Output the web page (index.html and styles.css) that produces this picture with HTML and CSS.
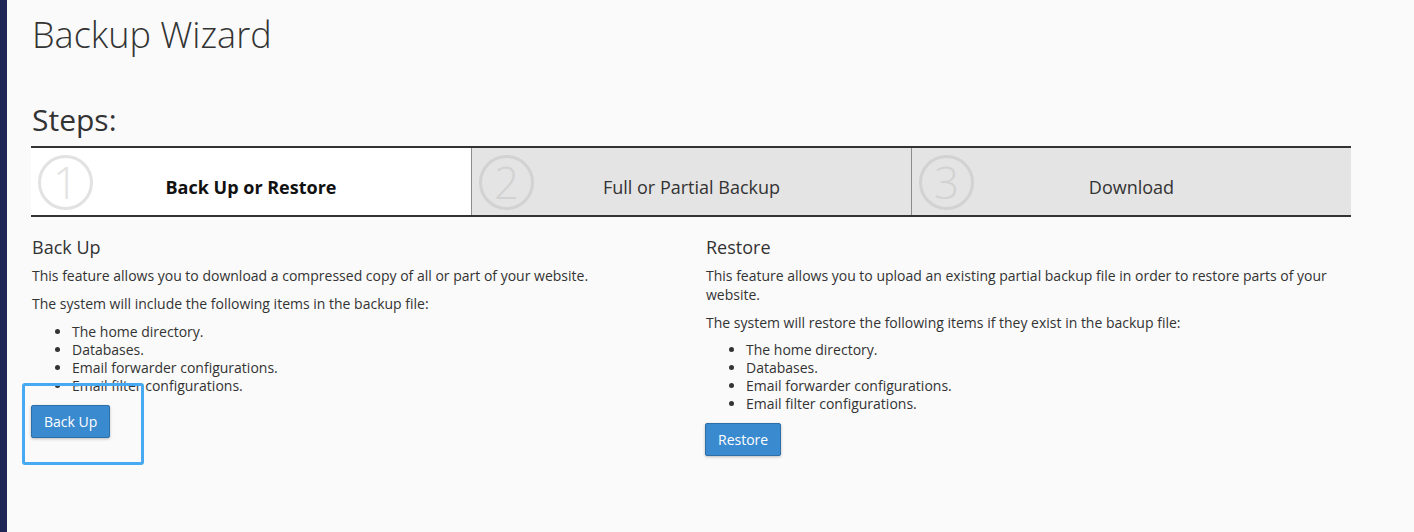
FILE: index.html
```html
<!DOCTYPE html>
<html>
<head>
<meta charset="utf-8">
<link rel="stylesheet" href="styles.css">
</head>
<body>
<div class="layout">
  <div class="sidebar"></div>
  <main class="main">
    <h1 class="title">Backup Wizard</h1>
    <h2 class="steps-title">Steps:</h2>
    <div class="steps">
      <div class="step active">
        <span class="step-num">1</span>
        <span class="step-label">Back Up or Restore</span>
      </div>
      <div class="step">
        <span class="step-num">2</span>
        <span class="step-label">Full or Partial Backup</span>
      </div>
      <div class="step">
        <span class="step-num">3</span>
        <span class="step-label">Download</span>
      </div>
    </div>
    <div class="columns">
      <section class="col col-backup">
        <h3 class="col-title">Back Up</h3>
        <p>This feature allows you to download a compressed copy of all or part of your website.</p>
        <p>The system will include the following items in the backup file:</p>
        <ul>
          <li>The home directory.</li>
          <li>Databases.</li>
          <li>Email forwarder configurations.</li>
          <li>Email filter configurations.</li>
        </ul>
        <div class="btn-wrap">
          <button class="btn">Back Up</button>
          <span class="highlight"></span>
        </div>
      </section>
      <section class="col">
        <h3 class="col-title">Restore</h3>
        <p>This feature allows you to upload an existing partial backup file in order to restore parts of your website.</p>
        <p>The system will restore the following items if they exist in the backup file:</p>
        <ul>
          <li>The home directory.</li>
          <li>Databases.</li>
          <li>Email forwarder configurations.</li>
          <li>Email filter configurations.</li>
        </ul>
        <div class="btn-wrap">
          <button class="btn">Restore</button>
        </div>
      </section>
    </div>
  </main>
</div>
</body>
</html>
```
FILE: styles.css
```css
html, body {
  margin: 0;
  padding: 0;
  background: #fafafa;
  font-family: "Open Sans", "Liberation Sans", sans-serif;
  color: #333;
}
.layout {
  display: flex;
  min-height: 532px;
}
.sidebar {
  width: 7px;
  flex: none;
  background: #1f2656;
}
.main {
  padding-left: 24px;
  width: 1320px;
}
.title {
  margin: 12px 0 0 1px;
  font-size: 36px;
  font-weight: 300;
  line-height: 46px;
  color: #333;
}
.steps-title {
  margin: 44px 0 0 1px;
  font-size: 30px;
  font-weight: 400;
  line-height: 36px;
  color: #333;
}
.steps {
  margin-top: 8px;
  display: grid;
  grid-template-columns: 440px 440px 440px;
  border-top: 2px solid #333;
  border-bottom: 2px solid #333;
}
.step {
  position: relative;
  height: 67px;
  display: flex;
  align-items: center;
  justify-content: center;
  background: #e4e4e4;
  border-left: 1px solid #8c8c8c;
  box-sizing: border-box;
}
.step.active {
  background: #fff;
  border-left: none;
}
.step-num {
  position: absolute;
  left: 7px;
  top: 7px;
  width: 49px;
  height: 49px;
  border: 3px solid #e2e2e2;
  border-radius: 50%;
  color: #e2e2e2;
  font-size: 44px;
  font-weight: 300;
  line-height: 49px;
  text-align: center;
}
.step:not(.active) .step-num {
  border-color: #d2d2d2;
  color: #d2d2d2;
}
.step-label {
  font-size: 18px;
  padding-top: 10px;
}
.step.active .step-label {
  font-weight: 700;
  color: #111;
}
.columns {
  display: grid;
  grid-template-columns: 645px 645px;
  column-gap: 29px;
  margin-top: 18px;
  padding-left: 1px;
}
.col-title {
  margin: 0 0 6px;
  font-size: 18px;
  font-weight: 400;
  line-height: 25px;
}
.col p {
  margin: 0 0 9px;
  font-size: 14px;
  line-height: 19px;
}
.col ul {
  margin: 0 0 10px;
  padding-left: 40px;
  font-size: 14px;
  line-height: 18px;
}
.col-backup ul {
  margin-top: 10px;
}
.btn-wrap {
  position: relative;
}
.btn {
  font-family: "Open Sans", "Liberation Sans", sans-serif;
  font-size: 14px;
  color: #fff;
  background: #3a8ad0;
  border: 1px solid #2e6fa8;
  border-radius: 2px;
  padding: 6px 12px;
  line-height: 19px;
  box-shadow: 0 1px 3px rgba(0,0,0,0.25);
  margin-left: -1px;
}
.highlight {
  position: absolute;
  left: -10px;
  top: -22px;
  width: 116px;
  height: 76px;
  border: 3px solid #47a9f2;
  border-radius: 3px;
}
```
